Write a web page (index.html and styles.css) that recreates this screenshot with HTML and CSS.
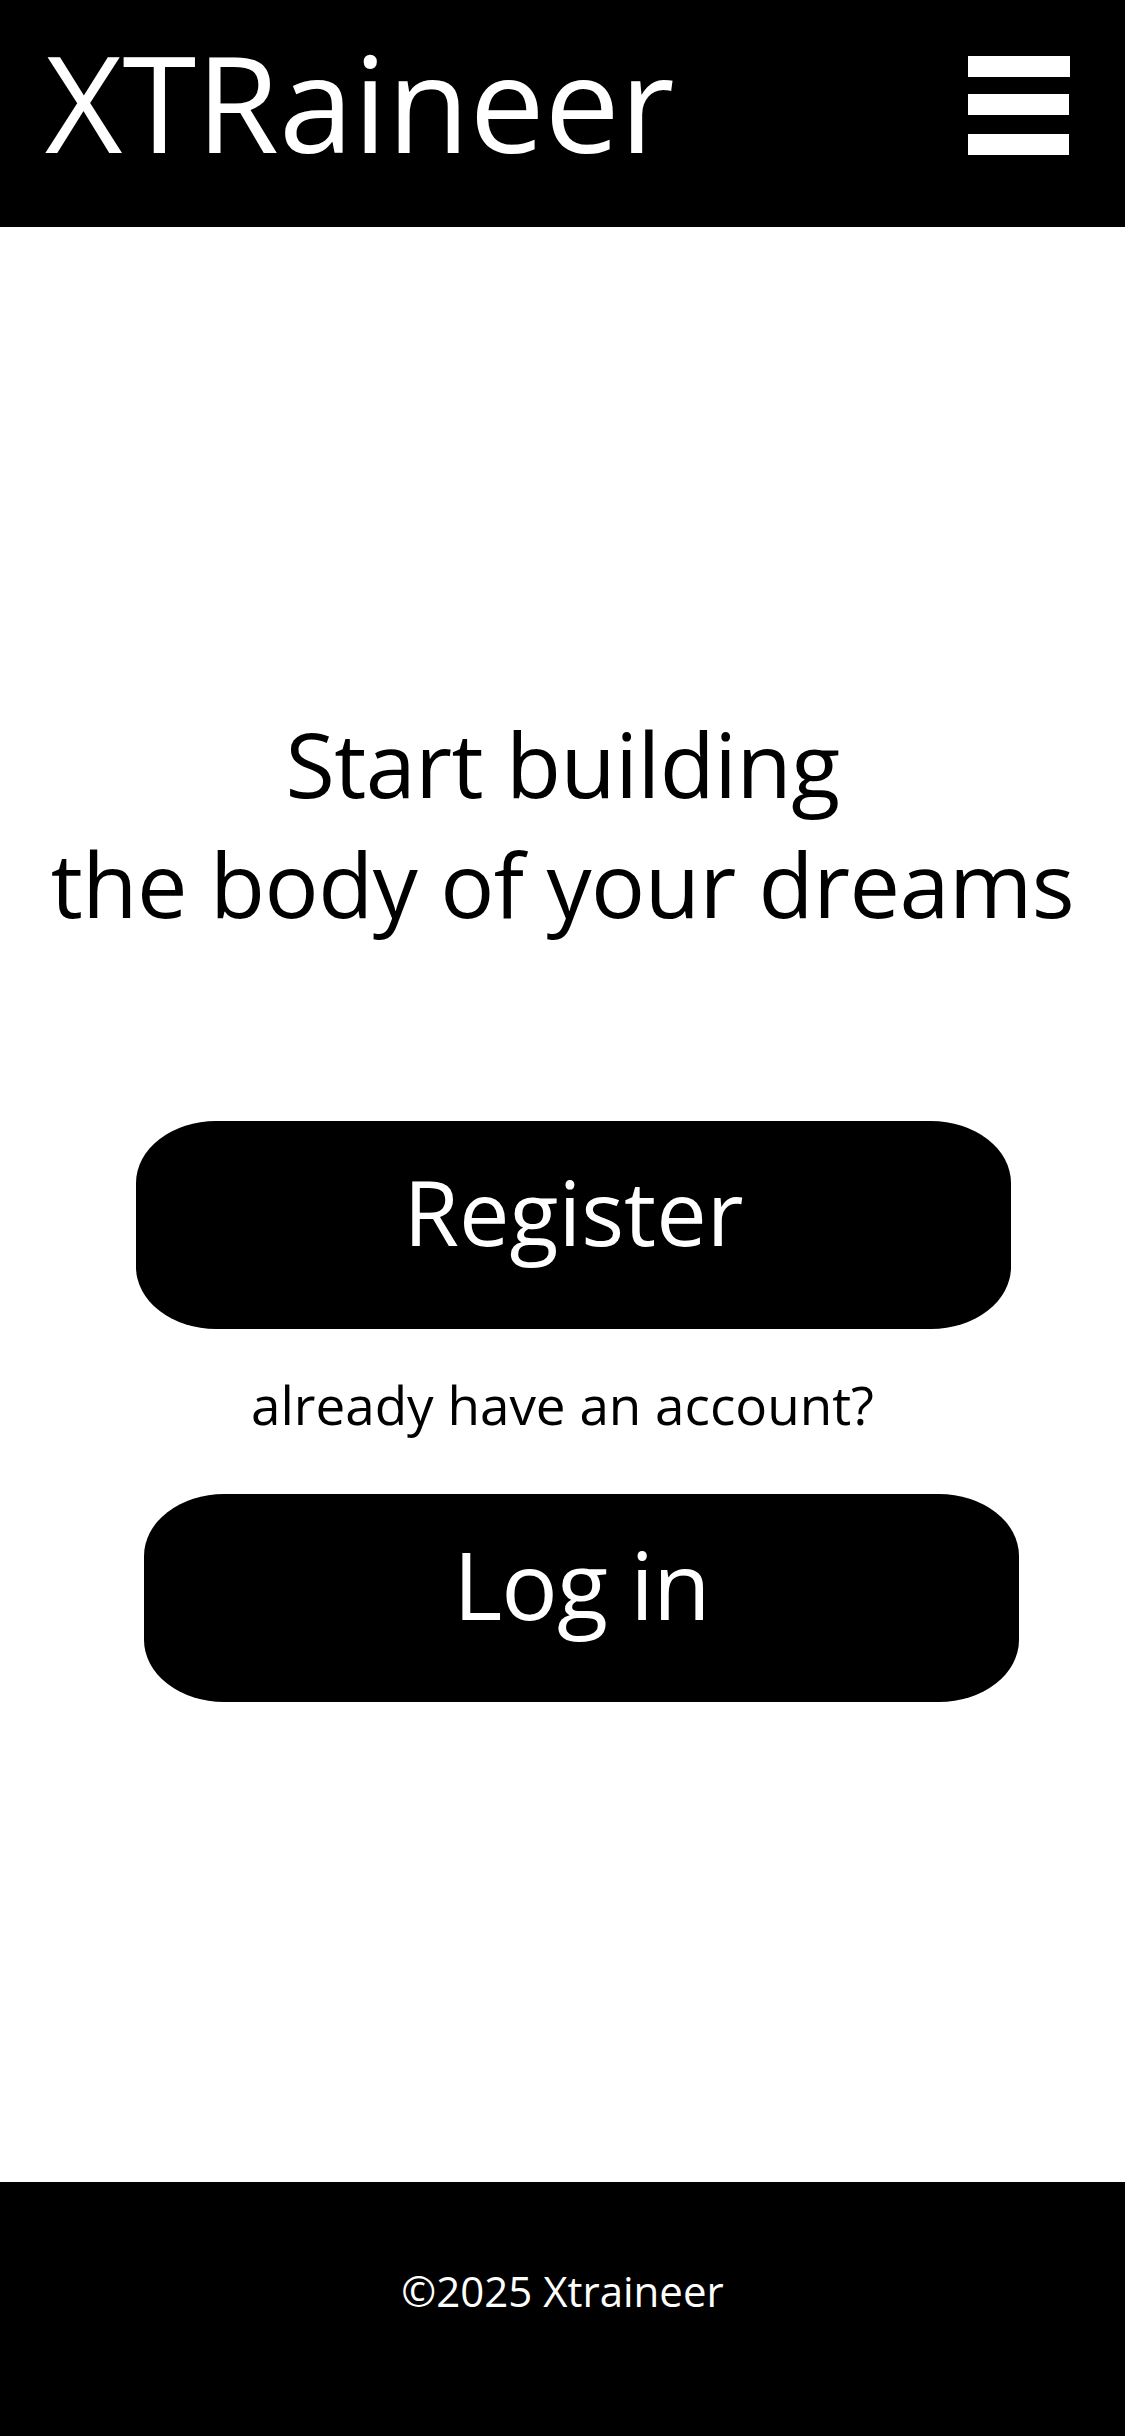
FILE: index.html
```html
<!DOCTYPE html>
<html lang="en">
<head>
<meta charset="utf-8">
<title>XTRaineer</title>
<link rel="stylesheet" href="styles.css">
</head>
<body>
<div class="page">
  <header class="topbar">
    <div class="brand">XTRaineer</div>
    <button class="menu" aria-label="Menu">
      <svg width="102" height="99" viewBox="0 0 102 99" xmlns="http://www.w3.org/2000/svg">
        <rect x="0" y="0" width="102" height="21" fill="#fff"/>
        <rect x="0" y="38" width="101" height="21" fill="#fff"/>
        <rect x="0" y="78" width="101" height="21" fill="#fff"/>
      </svg>
    </button>
  </header>
  <main class="main">
    <h1 class="headline">Start building<br>the body of your dreams</h1>
    <a class="btn btn-register" href="#">Register</a>
    <p class="hint">already have an account?</p>
    <a class="btn btn-login" href="#">Log in</a>
  </main>
  <footer class="footer">©2025 Xtraineer</footer>
</div>
</body>
</html>
```

FILE: styles.css
```css
* { box-sizing: border-box; }
html, body { margin: 0; padding: 0; background: #fff; }
body {
  font-family: "Open Sans", "Noto Sans", sans-serif;
  color: #000;
}
.page {
  min-height: 2436px;
  display: flex;
  flex-direction: column;
}
.topbar {
  height: 227px;
  background: #000;
  display: flex;
  align-items: flex-start;
  padding: 34px 55px 0 45px;
}
.brand {
  color: #fff;
  font-size: 134px;
  line-height: 1;
}
.menu {
  margin-left: auto;
  margin-top: 22px;
  padding: 0;
  border: 0;
  background: none;
  display: block;
  line-height: 0;
}
.main {
  flex: 1;
  display: flex;
  flex-direction: column;
  align-items: flex-start;
  padding-top: 476px;
}
.headline {
  align-self: stretch;
  margin: 0;
  text-align: center;
  font-weight: 400;
  font-size: 90px;
  letter-spacing: -0.5px;
  line-height: 120px;
}
.btn {
  display: block;
  width: 875px;
  height: 208px;
  background: #000;
  color: #fff;
  text-decoration: none;
  text-align: center;
  border-radius: 80px / 62px;
  line-height: 1;
}
.btn-register {
  margin: 178px 0 0 136px;
  font-size: 90px;
  padding-top: 45px;
}
.hint {
  align-self: stretch;
  margin: 46px 0 0;
  text-align: center;
  font-size: 53px;
  line-height: 60px;
}
.btn-login {
  margin: 59px 0 0 144px;
  font-size: 94px;
  letter-spacing: -1px;
  padding-top: 43px;
}
.footer {
  height: 254px;
  background: #000;
  color: #fff;
  text-align: center;
  font-size: 42px;
  line-height: normal;
  padding-top: 80px;
}
```
